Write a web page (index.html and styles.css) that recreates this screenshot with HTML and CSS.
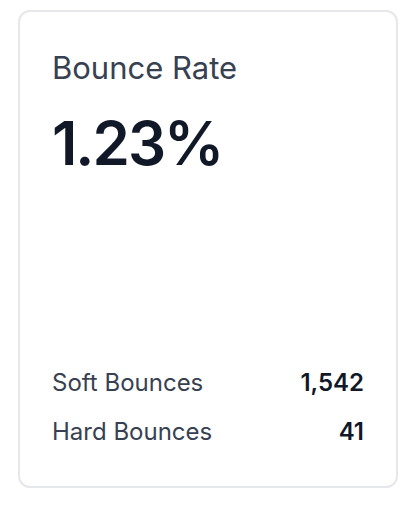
FILE: index.html
```html
<!DOCTYPE html>
<html>
<head>
<meta charset="utf-8">
<link rel="stylesheet" href="styles.css">
</head>
<body>
<div class="card">
  <div class="title">Bounce Rate</div>
  <div class="value">1.23%</div>
  <div class="rows">
    <div class="row"><span class="label">Soft Bounces</span><span class="num">1,542</span></div>
    <div class="row"><span class="label">Hard Bounces</span><span class="num">41</span></div>
  </div>
</div>
</body>
</html>
```

FILE: styles.css
```css
html, body {
  margin: 0;
  padding: 0;
  background: #ffffff;
}
body {
  padding: 10px 18px 20px 18px;
  font-family: Inter, "Noto Sans", sans-serif;
}
.card {
  box-sizing: border-box;
  height: 478px;
  border: 2px solid #e5e7eb;
  border-radius: 12px;
  padding: 36px 32px 38px 32px;
  display: flex;
  flex-direction: column;
}
.title {
  font-size: 31px;
  line-height: 40px;
  color: #374151;
  font-weight: 400;
}
.value {
  margin-top: 23px;
  font-size: 60px;
  line-height: 64px;
  font-weight: 600;
  color: #111827;
  letter-spacing: -2px;
}
.rows {
  margin-top: auto;
  display: flex;
  flex-direction: column;
  gap: 17px;
}
.row {
  display: flex;
  justify-content: space-between;
  font-size: 24px;
  line-height: 32px;
}
.label {
  color: #374151;
}
.num {
  color: #111827;
  font-weight: 600;
}
```
